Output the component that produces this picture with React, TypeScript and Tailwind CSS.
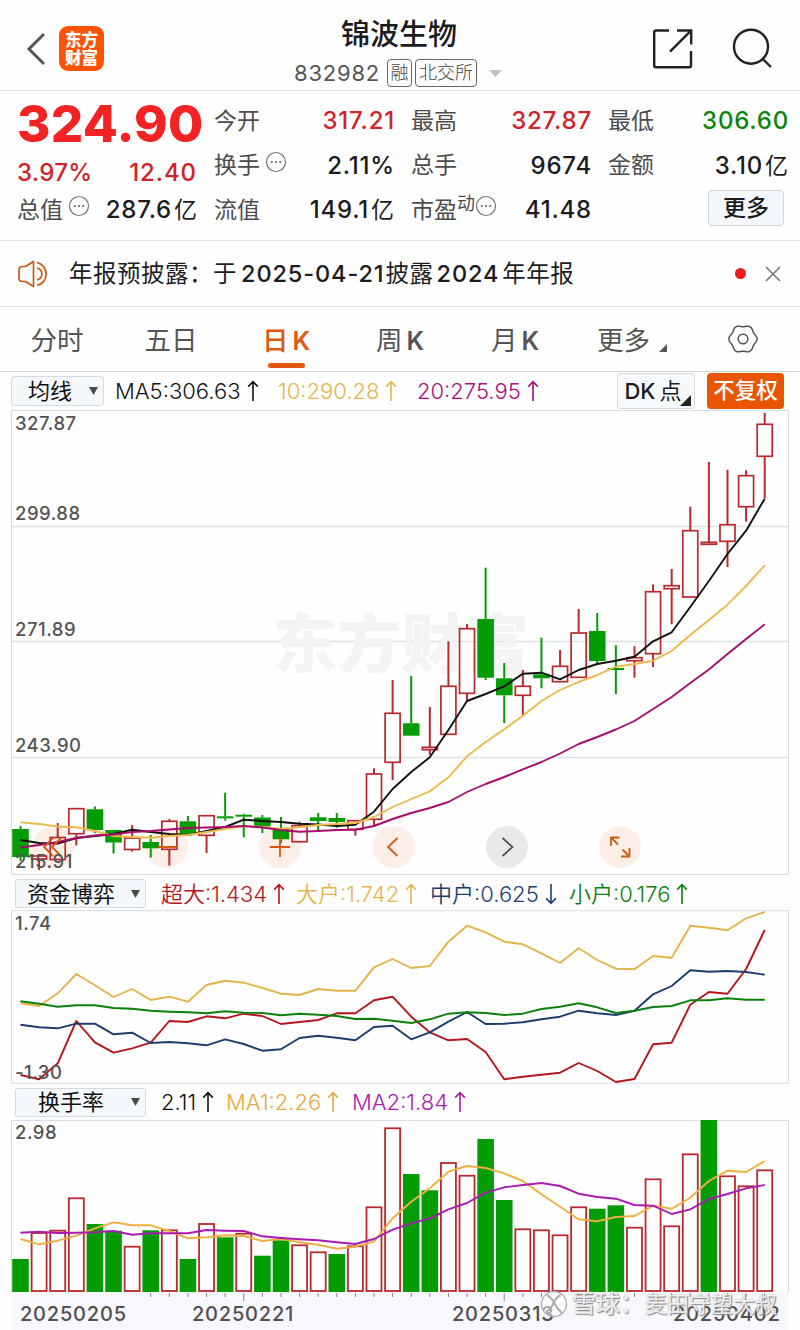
import React from 'react'

type Candle = [up: number, top: number, bottom: number, high: number, low: number]

const STEP = 18.605
const xAt = (i: number) => 20.5 + i * STEP

const RED = '#b9292e'
const GREEN = '#049c04'

// 1 = rising day, 0 = falling day
const candles: Candle[] = [
  [0, 829, 857, 826, 861], [1, 856, 859, 856, 870], [1, 837.5, 859.5, 823, 859.5], [1, 808.7, 833.7, 808.7, 845.5],
  [0, 809.3, 830, 806.5, 833], [0, 830, 842.5, 830, 853.5], [1, 838, 849.5, 825, 851.5], [0, 842, 848.3, 835, 857.6],
  [1, 821.3, 849.3, 819, 865.6], [0, 821.3, 834.3, 816, 834.3], [1, 815.7, 835.3, 815.7, 853], [0, 816.3, 818.3, 792.7, 820.6],
  [0, 814.7, 816.7, 813.6, 837.3], [0, 817.5, 826.5, 815, 833], [0, 828.3, 839.3, 817, 843], [1, 825.7, 841.7, 821.7, 841.7],
  [0, 817.3, 821, 813, 830], [0, 818, 822, 813, 827.7], [1, 820.7, 829.3, 820.7, 835.7], [1, 774, 819.3, 768.3, 825.7],
  [1, 713.3, 762.3, 680, 780], [0, 723.3, 735.7, 676, 735.7], [1, 747.3, 749.7, 707, 755], [1, 686.3, 734.3, 641.3, 734.3],
  [1, 628.7, 693.3, 624, 701.7], [0, 619, 677.7, 567.7, 680], [0, 678.3, 695.3, 663, 723], [1, 686.3, 695.3, 670, 715.7],
  [0, 674.3, 678.3, 637.7, 688.3], [1, 666.3, 681.7, 650, 681.7], [1, 633, 677.3, 609, 677.3], [0, 631, 661, 613, 664],
  [0, 668, 670, 645.3, 694], [1, 657.7, 660.7, 646.3, 677.7], [1, 591.7, 653.7, 584.3, 667], [1, 585.7, 588.7, 569, 624.3],
  [1, 530.7, 597, 506.7, 597], [1, 542.3, 544.3, 462, 544.3], [1, 524.7, 541.3, 469.7, 567], [1, 475.7, 506.7, 470.3, 521.7],
  [1, 424.3, 456.3, 413, 498.3],
]

const ma5 = [840, 843, 843.5, 838, 836, 834, 829.7, 832, 834, 835, 831, 827, 819.7, 821, 822, 823.7, 824.5, 826, 824.7, 811.7, 789, 772, 757.3, 730, 701, 694, 686.3, 673.7, 672.7, 679.3, 670, 664, 660.7, 656.7, 641.3, 632.3, 607, 581, 554, 530.7, 498.7]
const ma10 = [822.3, 824, 826.5, 827.3, 831, 836, 837, 837.7, 836, 835, 832, 829, 826, 827, 829, 827, 825, 824, 823, 817, 807, 799, 791.3, 777.3, 756.3, 742, 729.3, 715.7, 701, 690, 682, 675, 666.7, 664, 660.7, 651, 635, 620, 604.7, 586, 565.3]
const ma20 = [847.5, 845, 842, 838, 835.5, 834.5, 832, 831, 829.5, 828, 827.5, 827, 826, 827.5, 830, 831.7, 831, 830, 829.7, 826, 819, 813, 808, 802, 792, 784, 777, 769.3, 762, 753.5, 744, 737, 729.5, 721, 709, 697, 683, 669.5, 654, 639, 624.3]

const superFlow = [1075, 1079.3, 1063.3, 1021, 1042.3, 1052.7, 1048.3, 1042.7, 1021, 1022, 1016.3, 1018.3, 1013.7, 1016, 1024, 1022, 1020, 1013.3, 1013.3, 1000.3, 996.7, 1016.7, 1032.3, 1040.3, 1039, 1052, 1079.3, 1076.7, 1074.7, 1072.7, 1063, 1071, 1082, 1079, 1044.3, 1042.7, 1004.7, 992, 993.7, 969, 930]
const bigFlow = [1003.3, 1006, 993.3, 974, 985.3, 997, 989, 1000, 996.7, 1001.7, 985, 980.7, 982.7, 988, 993.7, 995, 989, 990.7, 990.7, 967.3, 959, 968, 966, 941.7, 925.7, 932.3, 941.7, 944.3, 953.3, 963, 948.3, 960, 968.7, 969.3, 956, 957.7, 925.7, 927.7, 930.3, 918.3, 912]
const midFlow = [1024.7, 1027.3, 1028.3, 1023.7, 1023.7, 1034.3, 1032.7, 1043, 1042, 1043.3, 1045.3, 1039.3, 1044, 1050.7, 1049.3, 1038, 1035.7, 1037.7, 1040.3, 1027, 1025.7, 1039.3, 1032.3, 1021.7, 1012, 1024, 1023.7, 1022.3, 1019.3, 1016.7, 1010.7, 1013.3, 1015, 1010.7, 994.3, 986, 970.3, 971.7, 971, 972, 974.7]
const smallFlow = [1001.3, 1003.7, 1006.7, 1005.3, 1005.3, 1008, 1008.7, 1010.7, 1011.7, 1012.3, 1013.3, 1011.3, 1012.7, 1013, 1015.3, 1013.7, 1014.7, 1016, 1019, 1018.7, 1020.7, 1023, 1019.3, 1013.7, 1012.3, 1013, 1015, 1013.7, 1009, 1006.7, 1003.3, 1007.3, 1013, 1010.7, 1007, 1006, 1000.3, 1000.3, 998.3, 999.7, 999.7]

const turnover: [number, number][] = [
  [0, 1259], [1, 1233], [1, 1230.7], [1, 1198.3], [0, 1224], [0, 1230.7], [1, 1246.7], [0, 1230.3], [1, 1230.3], [0, 1259],
  [1, 1224], [0, 1237.3], [1, 1233.7], [0, 1255.7], [0, 1240.3], [1, 1245.3], [1, 1252.3], [0, 1254], [1, 1246.3], [1, 1207.3],
  [1, 1128.3], [0, 1174], [0, 1190.3], [1, 1163], [1, 1175.7], [0, 1139], [0, 1200], [1, 1229.3], [1, 1230.3], [1, 1235.3],
  [1, 1207.3], [0, 1208.7], [0, 1205.3], [1, 1227.7], [1, 1179.3], [1, 1226.3], [1, 1154.3], [0, 1120], [1, 1176.3], [1, 1186.3],
  [1, 1170.3],
]
const turnMa1 = [1239, 1244.3, 1240.7, 1235.7, 1228.3, 1222.3, 1225.3, 1225.3, 1231, 1238.3, 1237.3, 1235.3, 1236, 1241, 1239, 1242.3, 1244.7, 1248.7, 1246.7, 1241.7, 1218.3, 1201.7, 1188.3, 1171.7, 1166, 1168, 1173.3, 1181, 1194.3, 1206.7, 1219.3, 1221.3, 1217, 1216, 1205.7, 1208.7, 1197.7, 1181, 1170.7, 1172, 1161]
const turnMa2 = [1232.7, 1231.7, 1233, 1232.7, 1232.3, 1231, 1234.7, 1233.3, 1233.3, 1233.3, 1230, 1230.7, 1231, 1236.3, 1238, 1239.3, 1240.3, 1242.3, 1244, 1239, 1229.7, 1223.3, 1218.3, 1209.3, 1203, 1192.7, 1187.3, 1185, 1183, 1186, 1193.7, 1197, 1198.7, 1205, 1205.7, 1214, 1209.3, 1199, 1194, 1188.3, 1185]

const Line: React.FC<{ data: number[]; color: string }> = ({ data, color }) => (
  <polyline
    points={data.map((y, i) => `${xAt(i)},${y}`).join(' ')}
    fill="none"
    stroke={color}
    strokeWidth={1.9}
    strokeLinejoin="round"
  />
)

const Info = ({ className = '' }: { className?: string }) => (
  <svg width="22" height="22" viewBox="0 0 22 22" className={`shrink-0 ${className}`}>
    <circle cx="11" cy="11" r="9.500" fill="none" stroke="#777" strokeWidth="1.200" />
    <circle cx="6.800" cy="11" r="1.100" fill="#666" />
    <circle cx="11" cy="11" r="1.100" fill="#666" />
    <circle cx="15.200" cy="11" r="1.100" fill="#666" />
  </svg>
)

interface QuoteProps {
  label: string
  value: string
  unit?: string
  color?: string
  info?: boolean
  sup?: string
}

const Quote: React.FC<QuoteProps> = ({ label, value, unit, color = 'text-[#1c1c1e]', info, sup }) => (
  <div className="flex h-[44.500px] items-center whitespace-nowrap">
    <span className="-ml-px text-[23px] leading-none text-[#4c4c4e]">{label}</span>
    {sup && <span className="-mt-3 text-[18px] leading-none text-[#4c4c4e]">{sup}</span>}
    {info && <Info className={sup ? '-mt-2' : 'ml-[5px] -mt-2'} />}
    <span className={`ml-auto text-[24px] font-medium leading-none tracking-[0.800px] ${unit ? '' : '-mr-px'} ${color}`}>
      {value}
      {unit && <span className="ml-[2px] text-[23px] font-normal tracking-normal">{unit}</span>}
    </span>
  </div>
)

const Arrow = ({ down = false }: { down?: boolean }) => (
  <svg width="12" height="22" viewBox="0 0 12 22" fill="none" stroke="currentColor" strokeWidth="1.600" className={`ml-[6px] shrink-0 ${down ? 'rotate-180' : ''}`}>
    <path d="M6 21V2M1.200 6.600 6 1.600l4.800 5" />
  </svg>
)

const Legend = ({ text, className, down }: { text: string; className: string; down?: boolean }) => (
  <div className={`flex shrink-0 items-center whitespace-nowrap text-[22px] font-[350] leading-none ${className}`}>
    <span>{text}</span>
    <Arrow down={down} />
  </div>
)

const Picker = ({ text, className }: { text: string; className: string }) => (
  <button className={`flex shrink-0 items-center justify-between rounded-[3px] border border-[#d3dae0] bg-[#f4f8fb] pr-[5px] text-[22px] leading-none text-[#111] ${className}`}>
    <span className="whitespace-nowrap">{text}</span>
    <svg width="9" height="8" viewBox="0 0 9 8"><path d="M0 0h9L4.500 8z" fill="#4a4a4a" /></svg>
  </button>
)

const tabs = [
  { text: '分时', width: 'w-[114px]' },
  { text: '五日', width: 'w-[114px]' },
  { text: '日', k: true, width: 'w-[116px]', active: true },
  { text: '周', k: true, width: 'w-[112px]' },
  { text: '月', k: true, width: 'w-[118px]' },
]

const gear = Array.from({ length: 73 }, (_, i) => {
  const a = (i * Math.PI) / 36
  const r = 13.2 + 0.9 * Math.cos(6 * a)
  return `${(16 + r * Math.cos(a)).toFixed(2)},${(16 + r * Math.sin(a)).toFixed(2)}`
}).join(' ')

const Header = () => (
  <header className="flex h-[91px] border-b border-[#dddfe2]">
    <div className="flex w-[280px] items-start pl-[26px] pt-[26px]">
      <svg width="20" height="44" viewBox="0 0 20 44" fill="none" stroke="#555" strokeWidth="3"><path d="M18 8 3 23l15 15" /></svg>
      <div className="ml-[13px] flex h-[45px] w-[45px] flex-col items-center justify-center rounded-[9px] bg-[#fb5203] text-[16.500px] font-black leading-[18px] text-white">
        <span>东方</span>
        <span>财富</span>
      </div>
    </div>
    <div className="flex w-[240px] flex-col items-center pt-[18px]">
      <h1 className="-ml-[2px] text-[29px] font-medium leading-[34px] text-[#1c1c1e]">锦波生物</h1>
      <div className="mt-[7px] flex w-full items-center pl-[14px]">
        <span className="w-[93px] text-[22px] leading-none tracking-[0.800px] text-[#555]">832982</span>
        <span className="flex h-[28px] w-[25px] items-center justify-center rounded-[4px] border border-[#666] text-[18px] font-light leading-none text-[#444]">融</span>
        <span className="ml-[3px] flex h-[28px] w-[62px] items-center justify-center whitespace-nowrap rounded-[4px] border border-[#666] text-[18px] font-light leading-none text-[#444]">北交所</span>
        <svg width="13" height="7" viewBox="0 0 13 7" className="ml-3 shrink-0"><path d="M0 0h13L6.500 7z" fill="#c4c4c6" /></svg>
      </div>
    </div>
    <div className="flex flex-1 pl-[132px] pt-[28px]">
      <svg width="42" height="42" viewBox="0 0 42 42" fill="none" stroke="#222" strokeWidth="2.400">
        <path d="M17 2.500H4A1.800 1.800 0 0 0 2.200 4.300V37.500A1.800 1.800 0 0 0 4 39.300H37.200A1.800 1.800 0 0 0 39 37.500V23M25 2.500H39.200V16.500M39 2.700 18 23.700" />
      </svg>
      <svg width="42" height="42" viewBox="0 0 42 42" fill="none" stroke="#222" strokeWidth="2.400" className="ml-[37px]">
        <circle cx="20" cy="18.700" r="17" />
        <path d="M31.500 30.800 40 39" />
      </svg>
    </div>
  </header>
)

const Quotes = () => (
  <section className="grid h-[150px] grid-cols-[179px_179px_179px_179px] gap-x-[18px] border-b border-[#e3e5e8] pl-[18px] pt-[8px]">
    <div>
      <div className="-ml-px h-[50px] whitespace-nowrap text-[51px] font-extrabold leading-[50px] tracking-[0.300px] text-[#f42323]">324.90</div>
      <div className="-ml-px flex h-[39px] items-center justify-between text-[24px] font-medium leading-none tracking-[0.300px] text-[#cf2329]">
        <span className="pt-2">3.97%</span>
        <span className="pt-2 tracking-[0.900px]">12.40</span>
      </div>
      <Quote label="总值" value="287.6" unit="亿" info />
    </div>
    <div>
      <Quote label="今开" value="317.21" color="text-[#cf2329]" />
      <Quote label="换手" value="2.11%" info />
      <Quote label="流值" value="149.1" unit="亿" />
    </div>
    <div>
      <Quote label="最高" value="327.87" color="text-[#cf2329]" />
      <Quote label="总手" value="9674" />
      <Quote label="市盈" sup="动" value="41.48" info />
    </div>
    <div>
      <Quote label="最低" value="306.60" color="text-[#0a850a]" />
      <Quote label="金额" value="3.10" unit="亿" />
      <button className="ml-auto mr-1 mt-[2px] flex h-9 w-[76px] items-center justify-center rounded-[4px] border border-[#ccd8e0] bg-[#f4f8fb] text-[23px] font-medium leading-none text-[#1c1c1e]">更多</button>
    </div>
  </section>
)

const Notice = () => (
  <section className="flex h-[66px] items-center border-b border-[#dfe1e4] pl-[17px]">
    <svg width="34" height="30" viewBox="0 0 34 30" fill="none" stroke="#cd5a14" strokeWidth="1.700" strokeLinejoin="round">
      <path d="M16.500 2.500 8.500 7.500H5.500Q2 7.500 2 11v8Q2 22.500 5.500 22.500H8.500L16.500 27.500z" />
      <path d="M20 3.500a11.800 11.800 0 0 1 0 23M20 9.200a5.900 5.900 0 0 1 0 11.600" />
    </svg>
    <p className="ml-[18px] whitespace-nowrap text-[23.500px] leading-none tracking-[0.500px] text-[#1c1c1e]">
      年报预披露：于
      <span className="ml-[4px] mr-[1px] font-medium tracking-[0.900px]">2025-04-21</span>
      披露
      <span className="ml-[3px] mr-[3px] font-medium tracking-[0.900px]">2024</span>
      年年报
    </p>
    <span className="ml-auto h-[11px] w-[11px] rounded-full bg-[#ee1c1c]" />
    <svg width="16" height="16" viewBox="0 0 16 16" stroke="#777" strokeWidth="1.600" className="ml-[19px] mr-[19px]"><path d="M1 1l14 14M15 1 1 15" /></svg>
  </section>
)

const Tabs = () => (
  <nav className="flex h-[65px] border-b border-[#cfd2d5] text-[26.500px] leading-none text-[#555557]">
    {tabs.map((tab) => (
      <div key={tab.text} className={`flex flex-col items-center pt-[20px] ${tab.width} ${tab.active ? 'font-medium text-[#e2560f]' : ''}`}>
        <span className="whitespace-nowrap">
          {tab.text}
          {tab.k && <span className="ml-[4px] text-[25px] font-semibold">K</span>}
        </span>
        {tab.active && <span className="mt-[9px] h-[5px] w-[37px] rounded-full bg-[#e2560f]" />}
      </div>
    ))}
    <div className="flex flex-1 pl-[23px] pt-[20px]">
      <span className="w-[53px] whitespace-nowrap">更多</span>
      <svg width="8" height="8" viewBox="0 0 8 8" className="ml-[9px] mt-[17px]"><path d="M8 0v8H0z" fill="#555" /></svg>
      <svg width="32" height="32" viewBox="0 0 32 32" fill="none" stroke="#555" strokeWidth="1.500" className="ml-[60px] -mt-[4px]">
        <polygon points={gear} />
        <circle cx="16" cy="16" r="4.800" />
      </svg>
    </div>
  </nav>
)

const Axis = ({ text, className }: { text: string; className: string }) => (
  <span className={`absolute left-[15px] text-[18.500px] font-medium leading-none tracking-[0.500px] text-[#555] ${className}`}>{text}</span>
)

const CandleChart = () => (
  <div className="relative h-[465px]">
    <svg width="800" height="465" viewBox="0 410 800 465" className="block">
      <rect x="11.500" y="410.500" width="777" height="464" fill="none" stroke="#d9dce0" />
      {[526.5, 641.5, 757.5].map((y) => (
        <line key={y} x1="12" x2="788" y1={y} y2={y} stroke="#dde2e5" strokeWidth="1.300" />
      ))}
      <text x="273" y="667" fontSize="64" fontWeight="900" fill="#f4f4f4">东方财富</text>
      {[53, 167, 280, 393.5, 507, 620].map((cx) => (
        <circle key={cx} cx={cx} cy="847" r="21" fill={cx === 507 ? '#e9e9e9' : '#fdefe8'} />
      ))}
      {candles.map(([up, top, bottom, high, low], i) => {
        const x = xAt(i)
        const color = up ? RED : GREEN
        return (
          <g key={i}>
            <line x1={x} x2={x} y1={high} y2={top} stroke={color} strokeWidth="2" />
            <line x1={x} x2={x} y1={bottom} y2={low} stroke={color} strokeWidth="2" />
            {up ? (
              <rect x={x - 7.5} y={top} width="15" height={bottom - top} fill="none" stroke={color} strokeWidth="1.700" />
            ) : (
              <rect x={x - 8.3} y={top} width="16.600" height={bottom - top} fill={color} />
            )}
          </g>
        )
      })}
      <Line data={ma5} color="#111" />
      <Line data={ma10} color="#ecb94d" />
      <Line data={ma20} color="#a90d6c" />
      <g fill="none" stroke="#d25a14" strokeWidth="1.800">
        <path d="M53 838l-9 9 9 9M61 838l-9 9 9 9M158 847h20M270 847h20M280 837v20M397.500 838l-9.500 9 9.500 9" />
        <path d="M611 846v-8.500h8.500M611.500 838l6.500 6.500M629.500 848v8.500h-8.500M629 856l-6.500-6.500" />
        <path d="M502.500 838l10 9-10 9" stroke="#555" />
      </g>
    </svg>
    <Axis text="327.87" className="top-[4px]" />
    <Axis text="299.88" className="top-[94px]" />
    <Axis text="271.89" className="top-[210px]" />
    <Axis text="243.90" className="top-[326px]" />
    <Axis text="215.91" className="top-[442px]" />
  </div>
)

const FlowChart = () => (
  <div className="relative h-[174px]">
    <svg width="800" height="174" viewBox="0 910 800 174" className="block">
      <rect x="11.500" y="910.700" width="777" height="172.500" fill="none" stroke="#d9dce0" />
      <Line data={bigFlow} color="#e4b44a" />
      <Line data={superFlow} color="#b5151d" />
      <Line data={midFlow} color="#1d3d6e" />
      <Line data={smallFlow} color="#0c800c" />
    </svg>
    <Axis text="1.74" className="top-[4px]" />
    <Axis text="-1.30" className="top-[153px]" />
  </div>
)

const TurnoverChart = () => (
  <div className="relative h-[210px]">
    <svg width="800" height="210" viewBox="0 1120 800 210" className="block">
      <rect x="12" y="1292" width="776" height="38" fill="#f7f7fc" />
      <path d="M11.500 1292V1120.500H788.500V1292" fill="none" stroke="#d9dce0" />
      {turnover.map(([up, y], i) =>
        up ? (
          <rect key={i} x={xAt(i) - 7.5} y={y} width="15" height={1291 - y} fill="#fff" stroke={RED} strokeWidth="1.800" />
        ) : (
          <rect key={i} x={xAt(i) - 8.3} y={y} width="16.600" height={1292 - y} fill={GREEN} />
        ),
      )}
      {turnover.map((_, i) =>
        i > 6 ? (
          <line key={i} x1={xAt(i)} x2={xAt(i)} y1="1293" y2={i === 12 || i === 26 || i === 40 ? 1301 : 1297} stroke="#888" />
        ) : null,
      )}
      <Line data={turnMa1} color="#ecb040" />
      <Line data={turnMa2} color="#a91bb0" />
    </svg>
    <Axis text="2.98" className="top-[3px]" />
    <div className="absolute left-0 top-[184px] h-5 w-full">
      <div className="flex pl-[20px] text-[20px] font-medium leading-[20px] tracking-[0.800px] text-[#505052]">
        <span className="w-[172px]">20250205</span>
        <span className="w-[260px]">20250221</span>
        <span className="w-[221px]">20250313</span>
        <span>20250402</span>
      </div>
    </div>
    {/* author signature over the date strip */}
    <div className="absolute left-[540px] top-[170px] flex items-center whitespace-nowrap text-[22px] leading-[28px] text-white/80 [text-shadow:1px_1px_1px_#888,0_0_2px_#aaa]">
      <svg width="28" height="28" viewBox="0 0 28 28" fill="none" stroke="#aaa" strokeWidth="1.300">
        <circle cx="14" cy="14" r="12.500" fill="#fff" fillOpacity=".5" />
        <path d="M7 5q6 4 8 9t7 9M20 5q-6 5-7 9t-7 8" strokeWidth="2" />
      </svg>
      <span className="ml-[4px] w-[73px] text-[24px] font-medium">雪球：</span>
      <span>麦田守望大叔</span>
    </div>
  </div>
)

const App: React.FC = () => {
  return (
    <main className="h-[1330px] w-[800px] overflow-hidden bg-[#fefefe] font-['Inter','Noto_Sans_CJK_SC',sans-serif]" lang="zh-CN">
      <Header />
      <Quotes />
      <Notice />
      <Tabs />

      <div className="flex h-[38px] items-center pl-[11px]">
        <Picker text="均线" className="h-[30px] w-[93px] pl-4" />
        <Legend text="MA5:306.63" className="ml-[11px] w-[163px] text-[#111]" />
        <Legend text="10:290.28" className="w-[139px] text-[#e5b54c]" />
        <Legend text="20:275.95" className="w-[200px] text-[#a90d7a]" />
        <button className="flex h-9 w-[78px] shrink-0 items-center rounded-[3px] border border-[#d3dae0] bg-[#f6f9fb] pl-[5px] text-[22px] leading-none text-[#1c1c1e]">
          <span className="w-[60px] whitespace-nowrap">
            <span className="mr-[4px] font-medium">DK</span>点
          </span>
          <svg width="11" height="11" viewBox="0 0 11 11" className="-ml-[3px] mt-[18px] shrink-0"><path d="M11 0v11H0z" fill="#222" /></svg>
        </button>
        <button className="ml-3 flex h-9 w-[77px] shrink-0 items-center justify-center whitespace-nowrap rounded-[4px] bg-[#ea5504] text-[21.500px] font-medium leading-none text-white">不复权</button>
      </div>
      <CandleChart />

      <div className="flex h-[35px] items-center pl-[15px] pt-[2px]">
        <Picker text="资金博弈" className="h-[29px] w-[131px] pl-[11px]" />
        <Legend text="超大:1.434" className="ml-[15px] w-[135px] text-[#b5151d]" />
        <Legend text="大户:1.742" className="w-[134px] text-[#e5b54c]" />
        <Legend text="中户:0.625" className="w-[139px] text-[#1d3d6e]" down />
        <Legend text="小户:0.176" className="text-[#0c800c]" />
      </div>
      <FlowChart />

      <div className="flex h-[36px] items-center pl-[15px]">
        <Picker text="换手率" className="h-[29px] w-[131px] pl-[22px]" />
        <Legend text="2.11" className="ml-[15px] w-[65px] text-[#111]" />
        <Legend text="MA1:2.26" className="w-[126px] text-[#e5a93c]" />
        <Legend text="MA2:1.84" className="text-[#a91bb0]" />
      </div>
      <TurnoverChart />
    </main>
  )
}

export default App
